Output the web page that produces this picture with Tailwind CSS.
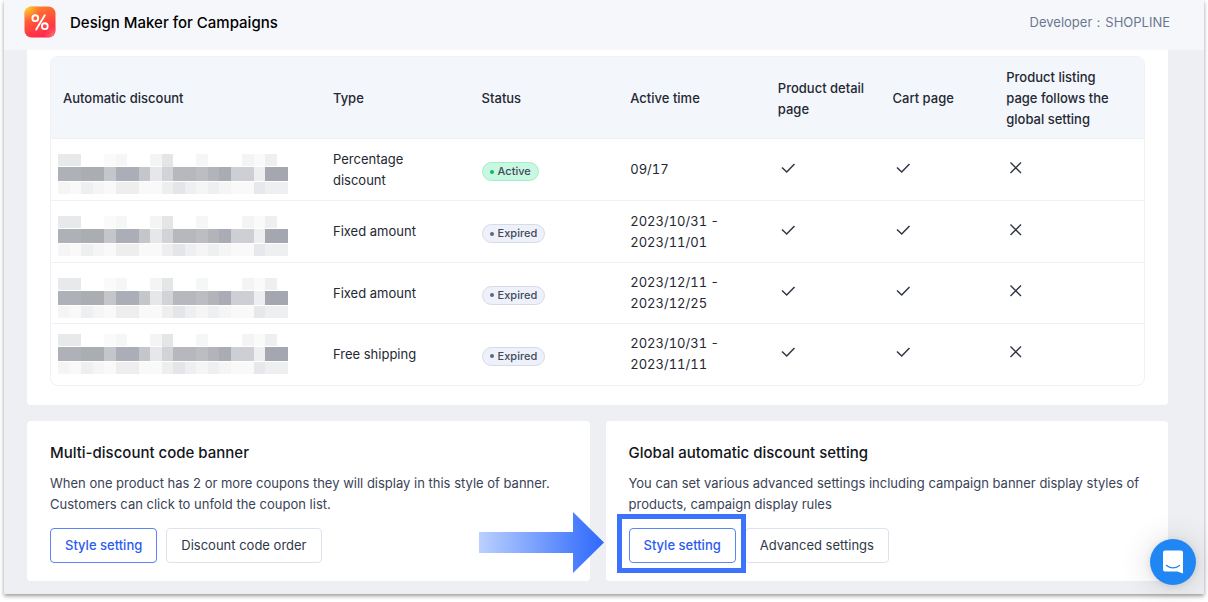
<!DOCTYPE html>
<html lang="en">
<head>
    <meta charset="UTF-8">
    <meta name="viewport" content="width=device-width, initial-scale=1.0">
    <title>Design Maker for Campaigns</title>
    <script src="https://cdn.jsdelivr.net/npm/@tailwindcss/browser@4"></script>
</head>
<body class="bg-white px-1 pb-2 font-['Inter',sans-serif] text-[13px] leading-[21px] text-[#242833]">
    <!-- Shared icons -->
    <svg class="hidden" aria-hidden="true">
        <symbol id="check" viewBox="0 0 20 20">
            <path d="M4 9.5 8.7 14 16.5 6" fill="none" stroke="#2f3644" stroke-width="1.5" />
        </symbol>
        <symbol id="cross" viewBox="0 0 20 20">
            <path d="M4.5 4.5 15 15M15 4.5 4.5 15" fill="none" stroke="#2f3644" stroke-width="1.4" />
        </symbol>
        <symbol id="masked" viewBox="0 0 20 40" preserveAspectRatio="none">
            <g shape-rendering="crispEdges">
                <path fill="#e7e9ea" d="M0 0h2v12H0z" />
                <path fill="#fafafa" d="M4 0h1v12H4zM17 0h1v12h-1z" />
                <path fill="#f5f7f7" d="M5 0h1v12H5zM12 0h1v12h-1z" />
                <path fill="#f4f4f5" d="M8 0h1v12H8zM16 0h1v12h-1z" />
                <path fill="#e3e5e7" d="M9 0h1v13H9z" />
                <path fill="#eeeff1" d="M18 0h1v12h-1z" />

                <path fill="#aeb1b7" d="M0 13h2v14H0z" />
                <path fill="#aaaeb2" d="M2 13h2v14H2z" />
                <path fill="#c4c6ca" d="M4 13h1v14H4zM7 13h1v14H7z" />
                <path fill="#abaeb6" d="M5 13h2v14H5z" />
                <path fill="#e6e7e9" d="M8 13h1v14H8z" />
                <path fill="#d1d3d7" d="M9 13h1v14H9z" />
                <path fill="#b6b8be" d="M10 13h2v14h-2z" />
                <path fill="#bcbdc3" d="M12 13h1v14h-1z" />
                <path fill="#b2b4ba" d="M13 13h1v14h-1z" />
                <path fill="#a9acb5" d="M14 13h1v14h-1z" />
                <path fill="#cecfd4" d="M15 13h2v14h-2z" />
                <path fill="#edeef0" d="M17 13h1v14h-1z" />
                <path fill="#a4a7b0" d="M18 13h2v14h-2z" />

                <path fill="#f5f5f5" d="M0 28h1v12H0zM3 28h1v12H3zM12 28h1v12h-1zM14 28h1v12h-1z" />
                <path fill="#f9f9f9" d="M1 28h1v12H1zM4 28h1v12H4zM7 28h2v12H7zM15 28h2v12h-2z" />
                <path fill="#edeff1" d="M2 28h1v12H2zM11 28h1v12h-1zM13 28h1v12h-1zM18 28h2v12h-2z" />
                <path fill="#eeeeee" d="M5 28h2v12H5zM9 28h1v12H9z" />
                <path fill="#e3e5e8" d="M10 28h1v12h-1z" />
                <path fill="#e7e8ec" d="M17 28h1v12h-1z" />
            </g>
        </symbol>
    </svg>

    <div class="relative bg-[#edeff3] shadow-[0_2px_4px_rgba(0,0,0,0.4)]">
        <!-- Header -->
        <header class="flex h-[50px] items-center justify-between bg-[#f6f7fb] pr-[34px] pb-[6px] pl-5">
            <div class="flex items-center gap-[14px]">
                <svg class="size-8" viewBox="0 0 32 32" aria-hidden="true">
                    <defs>
                        <linearGradient id="logoBase" x1="0.2" y1="0" x2="0.6" y2="1">
                            <stop offset="0" stop-color="#ff8a2b" />
                            <stop offset="0.5" stop-color="#ff5138" />
                            <stop offset="1" stop-color="#ff2350" />
                        </linearGradient>
                        <radialGradient id="logoTop" cx="0.04" cy="0" r="0.45">
                            <stop offset="0" stop-color="#ffe02e" />
                            <stop offset="1" stop-color="#ffb02e" stop-opacity="0" />
                        </radialGradient>
                        <radialGradient id="logoBottom" cx="1" cy="1" r="0.4">
                            <stop offset="0" stop-color="#ff9a78" />
                            <stop offset="1" stop-color="#ff5f60" stop-opacity="0" />
                        </radialGradient>
                    </defs>
                    <rect x="0.5" y="0.5" width="31" height="31" rx="7" fill="url(#logoBase)" />
                    <rect x="0.5" y="0.5" width="31" height="31" rx="7" fill="url(#logoTop)" />
                    <rect x="0.5" y="0.5" width="31" height="31" rx="7" fill="url(#logoBottom)" />
                    <g fill="none" stroke="#fff" stroke-width="1.9" stroke-linecap="round">
                        <circle cx="11.3" cy="12.2" r="2.9" />
                        <circle cx="20.8" cy="20.2" r="2.9" />
                        <path d="M20.8 9.3 12.2 23.5" />
                    </g>
                </svg>
                <h1 class="text-[15px] font-medium text-black">Design Maker for Campaigns</h1>
            </div>
            <p class="text-[#6b7790]">Developer：SHOPLINE</p>
        </header>

        <main class="flex flex-col gap-4 pr-9 pb-[13px] pl-[23px]">
            <!-- Discount list -->
            <section class="rounded-b bg-white px-[23px] pt-[6px] pb-[19px]">
                <div class="overflow-hidden rounded-lg border border-[#eff1f6]">
                    <table class="w-full table-fixed text-left">
                        <colgroup>
                            <col class="w-[24.7%]">
                            <col class="w-[13.6%]">
                            <col class="w-[13.6%]">
                            <col class="w-[13.5%]">
                            <col class="w-[10.5%]">
                            <col class="w-[10.4%]">
                            <col>
                        </colgroup>
                        <thead class="bg-[#f3f6fb]">
                            <tr class="border-b border-[#eceff5]">
                                <th scope="col" class="px-3 pt-[10px] pb-2 font-medium">Automatic discount</th>
                                <th scope="col" class="px-3 pt-[10px] pb-2 font-medium">Type</th>
                                <th scope="col" class="px-3 pt-[10px] pb-2 font-medium">Status</th>
                                <th scope="col" class="px-3 pt-[10px] pb-2 font-medium">Active time</th>
                                <th scope="col" class="px-3 pt-[10px] pb-2 font-medium">Product detail page</th>
                                <th scope="col" class="px-3 pt-[10px] pb-2 font-medium">Cart page</th>
                                <th scope="col" class="pt-[10px] pr-6 pb-2 pl-3 font-medium">Product listing page follows the global setting</th>
                            </tr>
                        </thead>
                        <tbody class="divide-y divide-[#eff1f6]">
                            <tr class="h-[62px]">
                                <td class="pt-[15px] pl-[7px] align-top"><svg class="h-10 w-[230px]" aria-label="Hidden name"><use href="#masked" /></svg></td>
                                <td class="px-3">Percentage discount</td>
                                <td class="px-3 pt-1"><span class="flex h-[19px] w-fit items-center gap-1 rounded-full border border-[#a5ebcb] bg-[#c9f8e0] px-[7px] text-[11px] font-medium text-[#414a5c]"><i class="size-1 rounded-full bg-[#0fb573]"></i>Active</span></td>
                                <td class="px-3 tabular-nums">09/17</td>
                                <td class="px-3 pb-1"><svg class="size-5" aria-label="Yes"><use href="#check" /></svg></td>
                                <td class="px-3 pb-1"><svg class="size-5" aria-label="Yes"><use href="#check" /></svg></td>
                                <td class="px-3 pb-1"><svg class="size-5" aria-label="No"><use href="#cross" /></svg></td>
                            </tr>
                            <tr class="h-[62px]">
                                <td class="pt-[15px] pl-[7px] align-top"><svg class="h-10 w-[230px]" aria-label="Hidden name"><use href="#masked" /></svg></td>
                                <td class="px-3">Fixed amount</td>
                                <td class="px-3 pt-1"><span class="flex h-[19px] w-fit items-center gap-1 rounded-full border border-[#d5dbe9] bg-[#eef1f9] px-[7px] text-[11px] font-medium text-[#414a5c]"><i class="size-1 rounded-full bg-[#5d6880]"></i>Expired</span></td>
                                <td class="px-3 tabular-nums">2023/10/31 -<br>2023/11/01</td>
                                <td class="px-3 pb-1"><svg class="size-5" aria-label="Yes"><use href="#check" /></svg></td>
                                <td class="px-3 pb-1"><svg class="size-5" aria-label="Yes"><use href="#check" /></svg></td>
                                <td class="px-3 pb-1"><svg class="size-5" aria-label="No"><use href="#cross" /></svg></td>
                            </tr>
                            <tr class="h-[61px]">
                                <td class="pt-[15px] pl-[7px] align-top"><svg class="h-10 w-[230px]" aria-label="Hidden name"><use href="#masked" /></svg></td>
                                <td class="px-3">Fixed amount</td>
                                <td class="px-3 pt-1"><span class="flex h-[19px] w-fit items-center gap-1 rounded-full border border-[#d5dbe9] bg-[#eef1f9] px-[7px] text-[11px] font-medium text-[#414a5c]"><i class="size-1 rounded-full bg-[#5d6880]"></i>Expired</span></td>
                                <td class="px-3 tabular-nums">2023/12/11 -<br>2023/12/25</td>
                                <td class="px-3 pb-1"><svg class="size-5" aria-label="Yes"><use href="#check" /></svg></td>
                                <td class="px-3 pb-1"><svg class="size-5" aria-label="Yes"><use href="#check" /></svg></td>
                                <td class="px-3 pb-1"><svg class="size-5" aria-label="No"><use href="#cross" /></svg></td>
                            </tr>
                            <tr class="h-[61px]">
                                <td class="pt-[10px] pl-[7px] align-top"><svg class="h-10 w-[230px]" aria-label="Hidden name"><use href="#masked" /></svg></td>
                                <td class="px-3">Free shipping</td>
                                <td class="px-3 pt-1"><span class="flex h-[19px] w-fit items-center gap-1 rounded-full border border-[#d5dbe9] bg-[#eef1f9] px-[7px] text-[11px] font-medium text-[#414a5c]"><i class="size-1 rounded-full bg-[#5d6880]"></i>Expired</span></td>
                                <td class="px-3 tabular-nums">2023/10/31 -<br>2023/11/11</td>
                                <td class="px-3 pb-1"><svg class="size-5" aria-label="Yes"><use href="#check" /></svg></td>
                                <td class="px-3 pb-1"><svg class="size-5" aria-label="Yes"><use href="#check" /></svg></td>
                                <td class="px-3 pb-1"><svg class="size-5" aria-label="No"><use href="#cross" /></svg></td>
                            </tr>
                        </tbody>
                    </table>
                </div>
            </section>

            <!-- Setting cards -->
            <div class="grid grid-cols-2 gap-4">
                <section class="rounded bg-white px-[23px] pt-5 pb-[18px]">
                    <h2 class="text-[15px] leading-6 font-medium text-[#12151c]">Multi-discount code banner</h2>
                    <p class="mt-2 text-[#3a4356]">When one product has 2 or more coupons they will display in this style of banner. Customers can click to unfold the coupon list.</p>
                    <div class="mt-[13px] flex gap-[9px]">
                        <button type="button" class="h-[35px] rounded border border-[#5b84f7] px-[14px] font-medium text-[#2b5cf0]">Style setting</button>
                        <button type="button" class="h-[35px] rounded border border-[#dde2ec] px-[14px] text-[#303849]">Discount code order</button>
                    </div>
                </section>
                <section class="rounded bg-white px-[23px] pt-5 pb-[18px]">
                    <h2 class="text-[15px] leading-6 font-medium text-[#12151c]">Global automatic discount setting</h2>
                    <p class="mt-2 text-[#3a4356]">You can set various advanced settings including campaign banner display styles of products, campaign display rules</p>
                    <div class="mt-[13px] flex gap-[9px]">
                        <div class="relative">
                            <button type="button" class="h-[35px] rounded border border-[#5b84f7] px-[14px] font-medium text-[#2b5cf0]">Style setting</button>
                            <!-- Callout: frame and arrow -->
                            <div class="pointer-events-none absolute -top-[14px] -right-[10px] -bottom-[10px] -left-3 border-[5px] border-[#3b73fd]"></div>
                            <svg class="pointer-events-none absolute -top-4 right-full mr-[25px] h-[61px] w-[125px]" viewBox="0 0 125 61" aria-hidden="true">
                                <defs>
                                    <linearGradient id="arrow">
                                        <stop offset="0" stop-color="#bad0ff" />
                                        <stop offset="0.85" stop-color="#4277fd" />
                                        <stop offset="1" stop-color="#3069fc" />
                                    </linearGradient>
                                </defs>
                                <path d="M0 20h94V0l31 30.5L94 61V41H0z" fill="url(#arrow)" />
                            </svg>
                        </div>
                        <button type="button" class="h-[35px] rounded border border-[#dde2ec] px-[14px] text-[#303849]">Advanced settings</button>
                    </div>
                </section>
            </div>
        </main>

        <!-- Chat launcher -->
        <button type="button" aria-label="Open chat" class="absolute right-2 bottom-[9px] flex size-[46px] items-center justify-center rounded-full bg-[#2086f4] shadow-[0_1px_6px_rgba(0,0,0,0.1),0_2px_32px_rgba(0,0,0,0.16)]">
            <svg class="h-6 w-[22px]" viewBox="0 0 22 24" aria-hidden="true">
                <path d="M3 0.5h16a2 2 0 0 1 2 2V23.5l-5.500-2H3a2 2 0 0 1-2-2V2.5a2 2 0 0 1 2-2z" fill="#fff" />
                <path d="M4.5 15.5c4 3 9 3 13 0" fill="none" stroke="#2086f4" stroke-width="1.3" stroke-linecap="round" />
            </svg>
        </button>
    </div>
</body>
</html>
